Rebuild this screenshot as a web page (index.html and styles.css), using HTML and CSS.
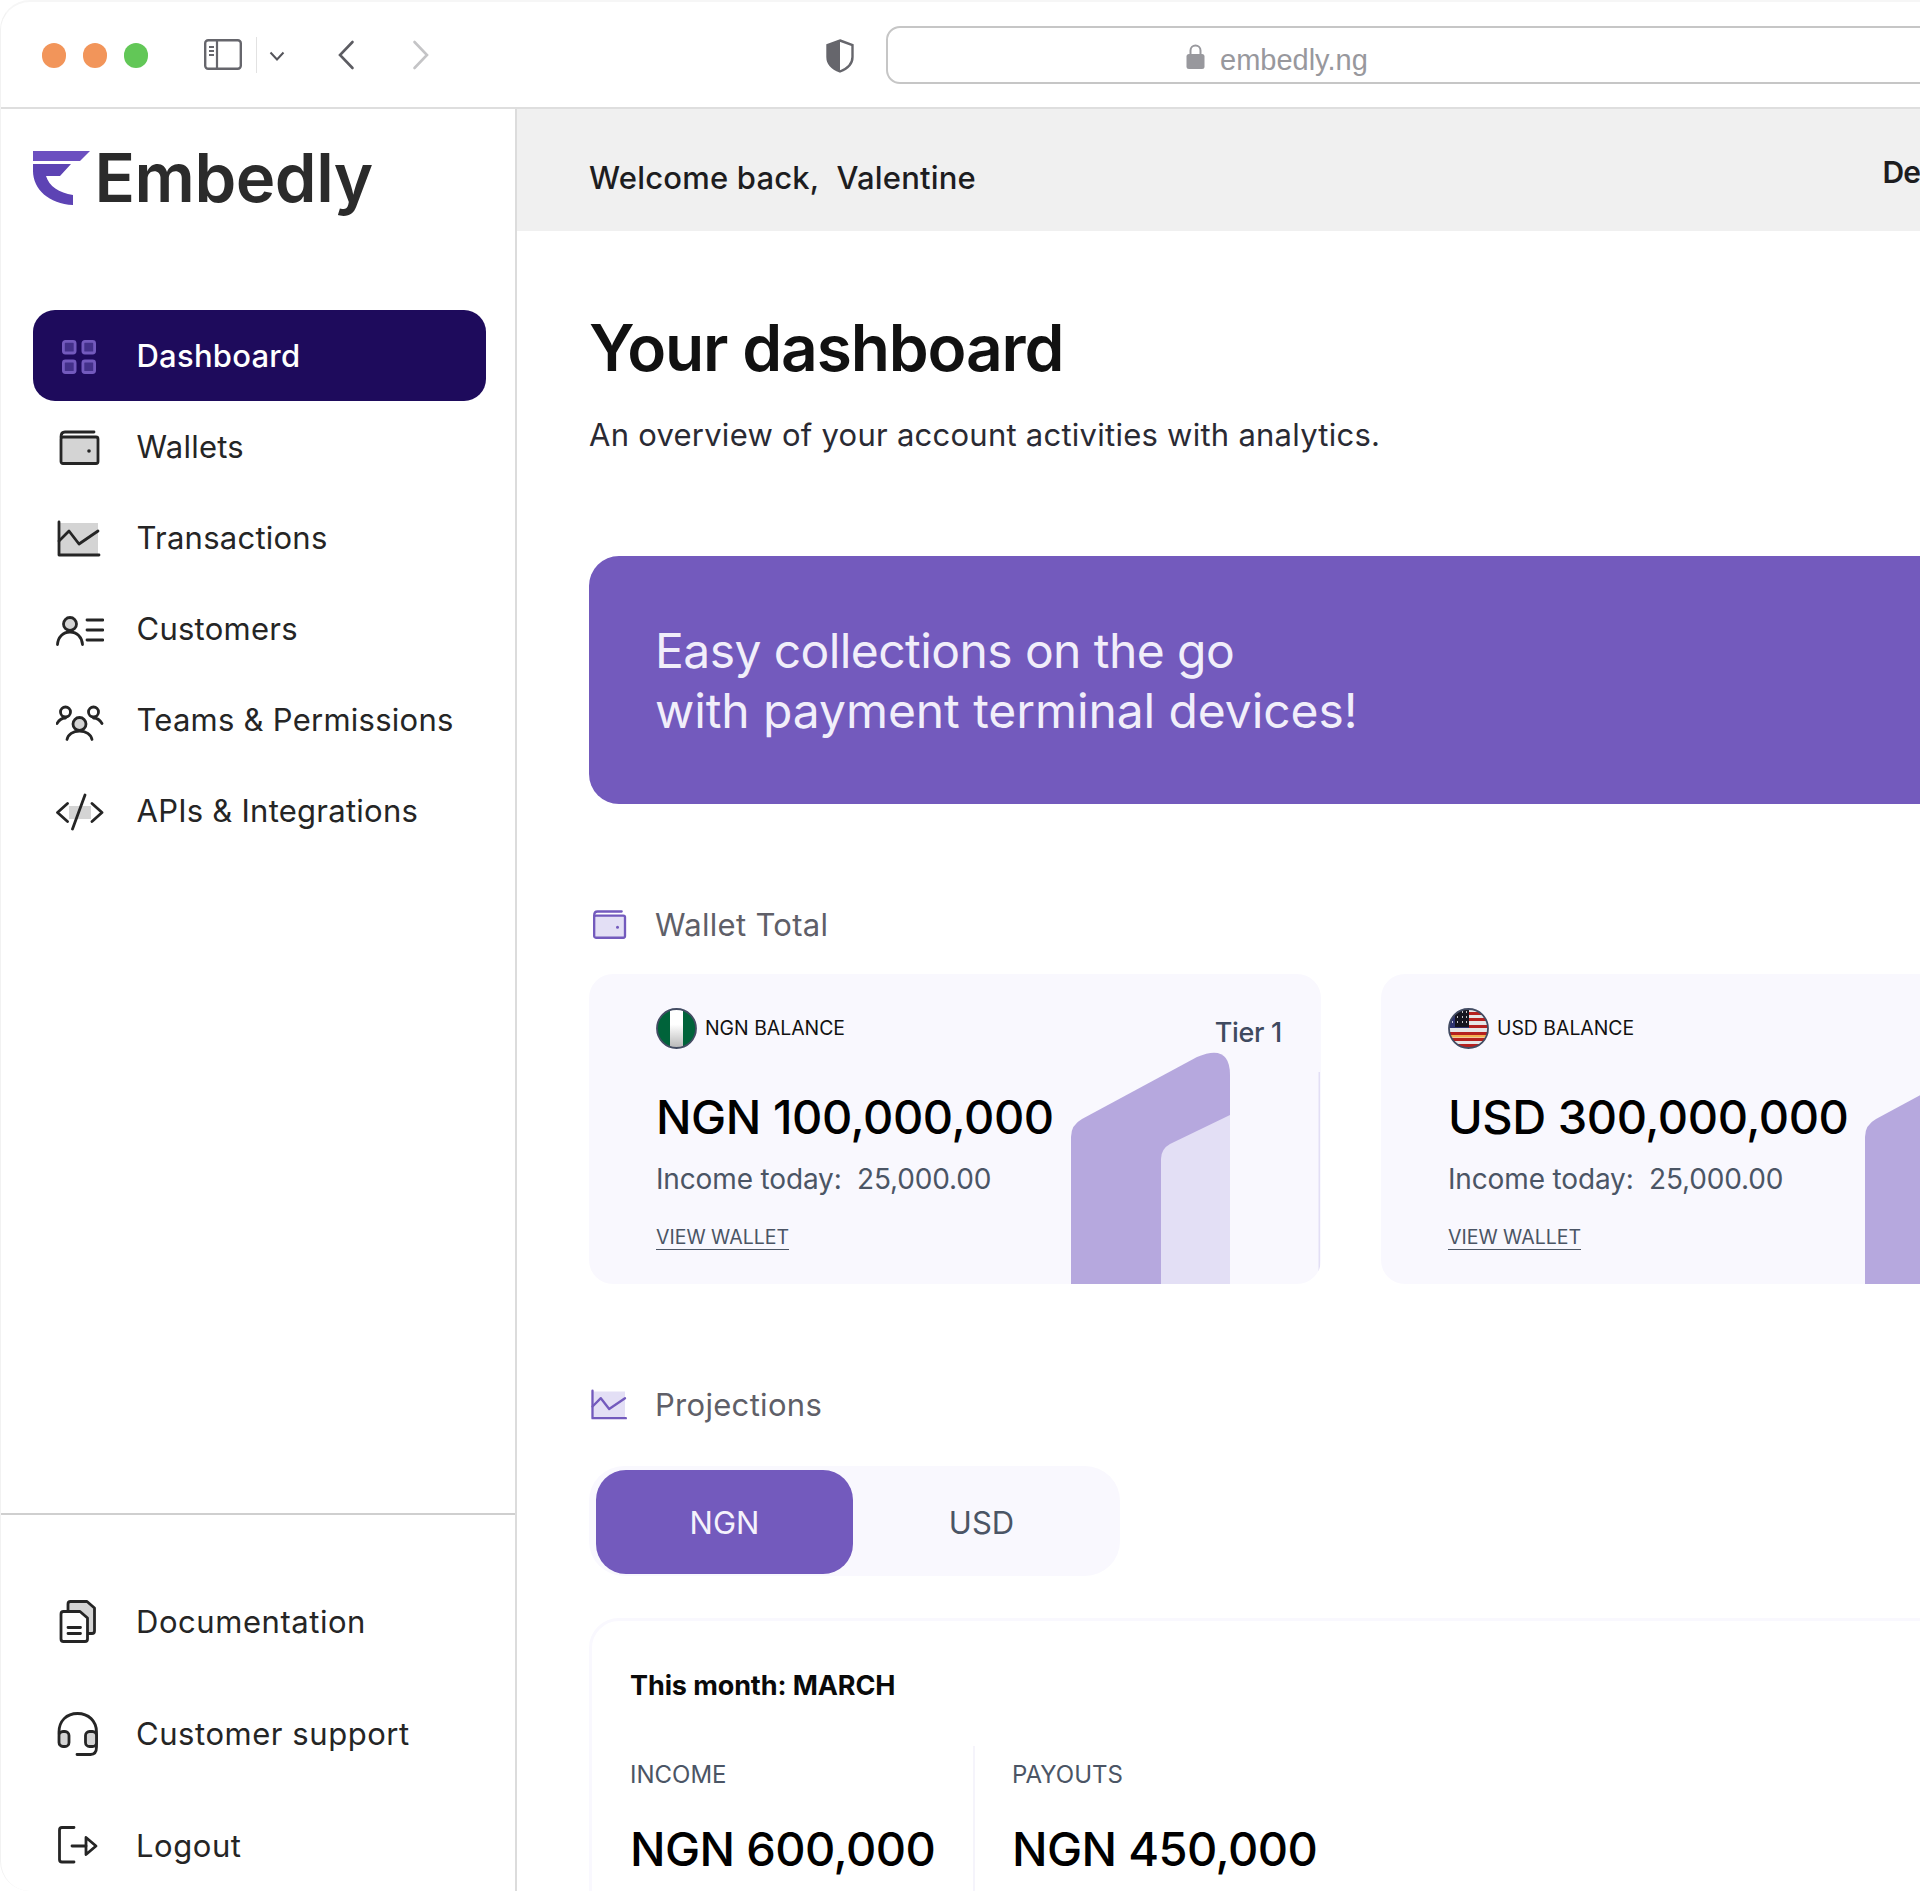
FILE: index.html
```html
<!DOCTYPE html>
<html lang="en">
<head>
<meta charset="utf-8">
<title>Embedly dashboard</title>
<link rel="stylesheet" href="styles.css">
</head>
<body>
<div class="window">
  <header class="toolbar">
    <div class="lights"><span class="light orange"></span><span class="light orange"></span><span class="light green"></span></div>
    <svg class="tb-sidebar" width="38" height="31" viewBox="0 0 38 31"><rect x="1.2" y="1.2" width="35.6" height="28.6" rx="3" fill="none" stroke="#66666c" stroke-width="2.4"/><path d="M13 1v29" stroke="#66666c" stroke-width="2.2"/><path d="M5 8h5M5 12h5M5 16h5" stroke="#66666c" stroke-width="1.8"/></svg>
    <span class="tb-divider"></span>
    <svg class="tb-chevron" width="16" height="10" viewBox="0 0 16 10"><path d="M1.5 1.5 8 8.5l6.500-7" fill="none" stroke="#55555b" stroke-width="2"/></svg>
    <svg class="tb-back" width="18" height="30" viewBox="0 0 18 30"><path d="M15.500 2 3 15l12.500 13" fill="none" stroke="#5c5c62" stroke-width="2.600" stroke-linecap="round"/></svg>
    <svg class="tb-forward" width="18" height="30" viewBox="0 0 18 30"><path d="M2.500 2 15 15 2.500 28" fill="none" stroke="#c4c4c6" stroke-width="2.600" stroke-linecap="round"/></svg>
    <svg class="tb-shield" width="28" height="34" viewBox="0 0 28 34"><path d="M14 1.500 26.500 6v12c0 7-6 12-12.500 14.500C7.500 30 1.500 25 1.500 18V6z" fill="#fff" stroke="#66666c" stroke-width="2.400"/><path d="M14 1.500V32.500C7.500 30 1.500 25 1.500 18V6z" fill="#66666c"/></svg>
    <div class="urlbar">
      <svg class="url-lock" width="19" height="25" viewBox="0 0 19 25"><rect x="0.500" y="10" width="18" height="15" rx="2.500" fill="#98989d"/><path d="M4.500 11V6.500a5 5 0 0 1 10 0V11" fill="none" stroke="#98989d" stroke-width="2"/></svg>
      <span class="url-text">embedly.ng</span>
    </div>
  </header>

  <div class="app">
    <aside class="sidebar">
      <div class="side-top">
        <div class="logo">
          <svg class="logo-mark" width="57" height="54" viewBox="0 0 57 54"><path d="M0 0H57L47 10H0z" fill="#6c4fc0"/><path d="M0 13H38L27 25H13C16 35 26 42 40 44V54C16 53 0 38 0 20z" fill="#5d43b4"/></svg>
          <span class="logo-text">Embedly</span>
        </div>
        <nav class="nav">
          <a class="nav-item active">
            <svg class="ico" width="48" height="48" viewBox="0 0 48 48"><g fill="#43308a" stroke="#735abd" stroke-width="2.800"><rect x="7.400" y="9.400" width="11.700" height="11.600" rx="2"/><rect x="26.900" y="9.400" width="11.700" height="11.600" rx="2"/><rect x="7.400" y="29" width="11.700" height="11.500" rx="2"/><rect x="26.900" y="29" width="11.700" height="11.500" rx="2"/></g></svg>
            <span>Dashboard</span>
          </a>
          <a class="nav-item">
            <svg class="ico" width="48" height="48" viewBox="0 0 48 48"><rect class="duo" x="5" y="14" width="37" height="26.500" rx="2"/><path class="line" d="M38 9H9C6.500 9 5 11 5 14"/><circle cx="33" cy="28" r="1.800" class="dot"/></svg>
            <span>Wallets</span>
          </a>
          <a class="nav-item">
            <svg class="ico" width="48" height="48" viewBox="0 0 48 48"><rect class="fillonly" x="4" y="9" width="38" height="31"/><path class="line" d="M3 8V41H43"/><path class="line" d="M3 27 13 17l10 13 19-13"/></svg>
            <span>Transactions</span>
          </a>
          <a class="nav-item">
            <svg class="ico" width="48" height="48" viewBox="0 0 48 48"><circle class="duo" cx="14" cy="19" r="6.500"/><path class="line" d="M1.500 39.500C2 32 7 27 14 27s12 5 12.500 12.500"/><path class="line" d="M31 15H47M31 25H47M31 35H47"/></svg>
            <span>Customers</span>
          </a>
          <a class="nav-item">
            <svg class="ico" width="48" height="48" viewBox="0 0 48 48"><circle class="duo" cx="23.500" cy="28" r="6.500"/><path class="line" d="M11 43.500c1-5 6-8.500 12.500-8.500S35 38.500 36 43.500"/><circle class="line" cx="9.500" cy="16" r="5"/><circle class="line" cx="37.500" cy="16" r="5"/><path class="line" d="M1 27.500C3 24 6 22 9.500 22M46 27.500C44 24 41 22 37.500 22"/></svg>
            <span>Teams &amp; Permissions</span>
          </a>
          <a class="nav-item">
            <svg class="ico" width="48" height="48" viewBox="0 0 48 48"><path class="fillonly" d="M13 19H35V32H13z"/><path class="line" d="M11.500 16.500 1.500 25.500l10 9M36 16.500l10 9-10 9M29 8 16.500 42"/></svg>
            <span>APIs &amp; Integrations</span>
          </a>
        </nav>
      </div>
      <div class="side-bottom">
        <a class="nav-item plain">
          <svg class="ico" width="48" height="48" viewBox="0 0 48 48"><path class="duo" d="M12 13V6c0-1.500 1-2.500 2.500-2.500H31L38.500 10v23c0 1.500-1 2.500-2.500 2.500H31"/><path class="white" d="M5 16c0-1.500 1-2.500 2.500-2.500H24L31.500 20v21c0 1.500-1 2.500-2.500 2.500H7.500C6 43.500 5 42.500 5 41z"/><path class="line" d="M12 29.500H24.500M12 35.500H24.500"/></svg>
          <span>Documentation</span>
        </a>
        <a class="nav-item plain">
          <svg class="ico" width="48" height="48" viewBox="0 0 48 48"><path class="line" d="M3 24V22C3 11 10.500 3.500 21.500 3.500S40.500 11 40.500 22V37c0 5-2 7.500-6 7.500H21"/><rect class="duo" x="3" y="21.500" width="10" height="15" rx="4"/><rect class="duo" x="29.500" y="21.500" width="11" height="15" rx="4"/></svg>
          <span>Customer support</span>
        </a>
        <a class="nav-item plain">
          <svg class="ico" width="48" height="48" viewBox="0 0 48 48"><path class="line" d="M18 5.500H6c-1.500 0-2.500 1-2.500 2.500V37.500c0 1.500 1 2.500 2.500 2.500H18"/><path class="line" d="M16 24H30"/><path class="line" d="M30 15.500 40 24l-10 8.500z"/></svg>
          <span>Logout</span>
        </a>
      </div>
    </aside>

    <main class="main">
      <div class="topbar"><span class="welcome">Welcome back,&nbsp; Valentine</span><span class="env">De</span></div>
      <div class="content">
        <h1 class="title">Your dashboard</h1>
        <p class="subtitle">An overview of your account activities with analytics.</p>
        <div class="banner"><p><span class="banner-first">Easy collections on the go</span><br>with payment terminal devices!</p></div>

        <div class="section-head">
          <svg class="ico purple" width="40" height="40" viewBox="0 0 48 48"><rect class="duo" x="5" y="14" width="37" height="26.500" rx="2"/><path class="line" d="M38 9H9C6.500 9 5 11 5 14"/><circle cx="33" cy="28" r="1.800" class="dot"/></svg>
          <span>Wallet Total</span>
        </div>
        <div class="cards">
          <article class="card">
            <svg class="card-art" width="731" height="310" viewBox="0 0 731 310"><g transform="translate(482 77)"><path d="M0 233V86Q0 74 11 68L126 6Q159-8 159 24V233Z" fill="#b6a8de"/><path d="M90 233V108Q90 98 99 93L159 64V233Z" fill="#e3dff5"/></g><path d="M729.500 98H731V310H729.500Z" fill="#e3dff5"/></svg>
            <div class="card-head">
              <svg class="flag" width="41" height="41" viewBox="0 0 41 41"><defs><clipPath id="ngc"><circle cx="20.500" cy="20.500" r="19.500"/></clipPath><linearGradient id="ngw" x1="0" y1="0" x2="0" y2="1"><stop offset="0.400" stop-color="#fff"/><stop offset="1" stop-color="#b4b4b4"/></linearGradient></defs><g clip-path="url(#ngc)"><rect width="41" height="41" fill="#00633a"/><rect x="14" width="13" height="41" fill="url(#ngw)"/></g><circle cx="20.500" cy="20.500" r="19.500" fill="none" stroke="#434c63" stroke-width="1.800"/></svg>
              <span class="card-label">NGN BALANCE</span>
            </div>
            <span class="tier">Tier 1</span>
            <div class="amount">NGN 100,000,000</div>
            <div class="income">Income today:&nbsp; 25,000.00</div>
            <a class="view">VIEW WALLET</a>
          </article>
          <article class="card">
            <svg class="card-art" width="731" height="310" viewBox="0 0 731 310"><g transform="translate(484 77)"><path d="M0 233V86Q0 74 11 68L126 6Q159-8 159 24V233Z" fill="#b6a8de"/></g></svg>
            <div class="card-head">
              <svg class="flag" width="41" height="41" viewBox="0 0 41 41"><defs><clipPath id="usc"><circle cx="20.500" cy="20.500" r="19.500"/></clipPath></defs><g clip-path="url(#usc)"><rect width="41" height="41" fill="#e6e6e6"/><path d="M0 4h41v3H0zM0 10h41v3H0zM0 17h41v3H0zM0 24h41v3H0zM0 30h41v3H0zM0 36h41v3H0z" fill="#b5211f"/><rect y="27" width="41" height="2.500" fill="#f3b04e"/><rect width="21" height="20" fill="#2f3470"/><rect x="7" width="14" height="19" fill="#15151f"/><path d="M4 4h1M4 9h1M4 14h1M9 4h1M9 9h1M9 14h1M14 4h1M14 9h1M14 14h1M18 4h1M18 9h1M18 14h1" stroke="#fff" stroke-width="1.500"/></g><circle cx="20.500" cy="20.500" r="19.500" fill="none" stroke="#434c63" stroke-width="1.800"/></svg>
              <span class="card-label">USD BALANCE</span>
            </div>
            <div class="amount">USD 300,000,000</div>
            <div class="income">Income today:&nbsp; 25,000.00</div>
            <a class="view">VIEW WALLET</a>
          </article>
        </div>

        <div class="section-head">
          <svg class="ico purple" width="40" height="40" viewBox="0 0 48 48"><rect class="fillonly" x="4" y="9" width="38" height="31"/><path class="line" d="M3 8V41H43"/><path class="line" d="M3 27 13 17l10 13 19-13"/></svg>
          <span>Projections</span>
        </div>
        <div class="toggle">
          <button class="tab on">NGN</button>
          <button class="tab">USD</button>
        </div>

        <section class="month">
          <h2 class="month-title">This month: MARCH</h2>
          <div class="stats">
            <div class="stat first"><div class="stat-label">INCOME</div><div class="amount stat-value">NGN 600,000</div></div>
            <div class="stat"><div class="stat-label">PAYOUTS</div><div class="amount stat-value">NGN 450,000</div></div>
          </div>
        </section>
      </div>
    </main>
  </div>
</div>
</body>
</html>
```
FILE: styles.css
```css
* { box-sizing: border-box; }
html, body { margin: 0; padding: 0; background: #fff; }
body { font-family: "Inter", "Noto Sans", sans-serif; color: #252525; width: 1920px; height: 1891px; overflow: hidden; }
.window { width: 1920px; height: 1891px; overflow: hidden; border-top: 2px solid #f6f6f6; border-left: 1px solid #f2f2f2; border-radius: 30px 0 0 30px; background: #fff; }

/* toolbar */
.toolbar { display: flex; align-items: center; height: 107px; border-bottom: 2px solid #dedede; padding-left: 40.500px; }
.toolbar > * { flex: none; }
.lights { display: flex; gap: 16.500px; margin-top: 2px; }
.light { width: 24.500px; height: 24.500px; border-radius: 50%; }
.orange { background: #f2955a; }
.green { background: #62c757; }
.tb-sidebar { margin-left: 55.500px; }
.tb-divider { width: 1.500px; height: 36px; background: #e2e2e2; margin-left: 14px; }
.tb-chevron { margin-left: 12px; margin-top: 2px; }
.tb-back { margin-left: 52px; }
.tb-forward { margin-left: 57px; }
.tb-shield { margin-left: 396px; margin-top: 2px; }
.urlbar { display: flex; align-items: center; gap: 15px; width: 1200px; height: 58px; margin-left: 32px; padding-left: 298px; border: 2.500px solid #c6c6c6; border-radius: 14px; }
.url-lock { margin-top: 3px; }
.url-text { font-family: "Liberation Sans", sans-serif; font-size: 29px; color: #98989d; margin-top: 11px; }

/* layout */
.app { display: flex; height: 1782px; }
.sidebar { width: 516px; flex: none; display: flex; flex-direction: column; border-right: 2px solid #dcdcdc; }
.side-top { height: 1406px; padding: 42px 29px 0 32px; }
.logo { display: flex; align-items: center; height: 54px; gap: 4.500px; }
.logo-mark { flex: none; }
.logo-text { font-size: 67px; font-weight: 600; color: #2b2b2b; letter-spacing: -0.500px; line-height: 54px; }
.nav { margin-top: 105px; display: flex; flex-direction: column; }
.nav-item { display: flex; align-items: center; height: 91px; border-radius: 22px; padding-left: 23px; gap: 32.500px; font-size: 31px; color: #252525; letter-spacing: 0.250px; }
.nav-item.active { background: #1e0b5c; color: #fff; font-weight: 500; }
.side-bottom { border-top: 2px solid #cfcfcf; padding: 61px 0 0 55px; display: flex; flex-direction: column; gap: 21px; }
.nav-item.plain { padding-left: 0; gap: 32px; letter-spacing: 0.550px; }

/* icons */
.ico { flex: none; --stroke: #252525; --fill: #d4d4d4; }
.ico.purple { --stroke: #735abd; --fill: #e3dff5; margin-left: 1px; }
.ico .line { fill: none; stroke: var(--stroke); stroke-width: 2.800; stroke-linecap: round; stroke-linejoin: round; }
.ico .duo { fill: var(--fill); stroke: var(--stroke); stroke-width: 2.800; stroke-linejoin: round; }
.ico .white { fill: #fff; stroke: var(--stroke); stroke-width: 2.800; stroke-linejoin: round; }
.ico .fillonly { fill: var(--fill); }
.ico .dot { fill: var(--stroke); }

/* main */
.main { flex: 1; min-width: 0; overflow: hidden; }
.topbar { display: flex; align-items: center; justify-content: space-between; height: 122px; background: #f0f0f0; padding-left: 72px; font-size: 31px; font-weight: 500; color: #1d1d1f; letter-spacing: 0.200px; }
.welcome { margin-top: 14px; }
.env { font-size: 30px; font-weight: 600; margin-top: 4px; letter-spacing: -1px; }
.content { padding-left: 72px; }
.title { margin: 79px 0 0; font-size: 64px; line-height: 76px; font-weight: 600; color: #111; letter-spacing: -1.150px; }
.subtitle { margin: 29px 0 0; font-size: 31px; line-height: 40px; color: #2a2a33; letter-spacing: 0.250px; }
.banner { width: 1500px; height: 248px; margin-top: 101px; background: #735abd; border-radius: 30px; padding: 65px 0 0 66px; }
.banner p { margin: 0; font-size: 48px; line-height: 60px; color: #f1eefa; letter-spacing: -0.080px; }
.banner-first { letter-spacing: -0.580px; }
.section-head { display: flex; align-items: center; gap: 25px; height: 40px; margin-top: 100px; font-size: 31px; color: #5f5f68; letter-spacing: 0.300px; }
.cards { display: flex; gap: 60px; margin-top: 30px; }
.card { position: relative; flex: 0 0 732px; height: 310px; background: #f9f8fe; border-radius: 24px; overflow: hidden; padding: 34px 0 0 67px; }
.card-art { position: absolute; left: 0; top: 0; }
.card-head { display: flex; align-items: center; gap: 8px; position: relative; }
.flag { flex: none; }
.card-label { font-size: 19.400px; color: #111; margin-top: -2px; }
.tier { position: absolute; right: 39px; top: 42px; font-size: 27px; color: #3f4a60; font-weight: 500; letter-spacing: -0.300px; }
.amount { font-size: 47px; line-height: 56px; font-weight: 500; color: #000; letter-spacing: -0.450px; }
.card .amount { margin-top: 40px; position: relative; }
.income { margin-top: 16px; font-size: 28px; line-height: 36px; color: #4b5565; position: relative; letter-spacing: -0.150px; }
.view { display: inline-block; margin-top: 29px; font-size: 19.500px; line-height: 23px; color: #4b5565; border-bottom: 1px solid #4b5565; position: relative; }
.toggle { display: flex; width: 531px; height: 110px; margin-top: 42px; padding: 4px 7px 2px; background: #f9f8fe; border-radius: 35px; }
.tab { width: 257px; border: 0; background: transparent; font: inherit; font-size: 31px; color: #4b5565; border-radius: 30px; padding: 0; }
.tab.on { background: #735abd; color: #f5f2fc; }
.month { width: 1500px; height: 400px; margin-top: 42px; border: 3px solid #f9f8fe; border-radius: 30px; padding: 47px 0 0 38px; }
.month-title { margin: 0; font-size: 27px; line-height: 36px; font-weight: 700; color: #0a0a0a; letter-spacing: -0.100px; }
.stats { display: flex; margin-top: 42px; }
.stat { padding: 14px 0 0 37px; height: 200px; }
.stat.first { width: 345px; padding-left: 0; border-right: 2px solid #f5f4fb; }
.stat-label { font-size: 24px; line-height: 30px; color: #4b5565; }
.stat-value { margin-top: 31px; letter-spacing: -0.600px; }
```
